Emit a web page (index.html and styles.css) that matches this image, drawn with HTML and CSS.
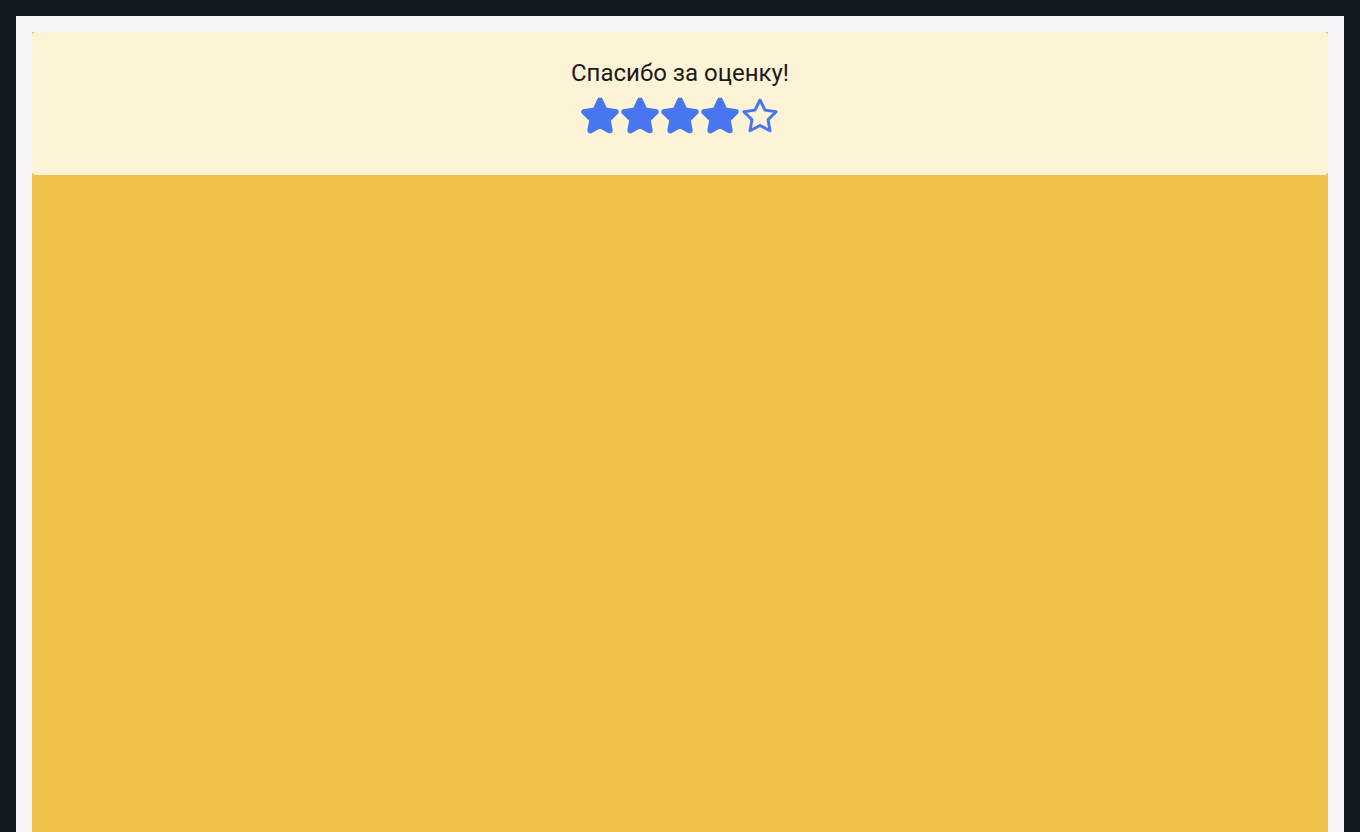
FILE: index.html
```html
<!DOCTYPE html>
<html lang="ru">
<head>
<meta charset="utf-8">
<title>Спасибо за оценку</title>
<link rel="stylesheet" href="styles.css">
</head>
<body>
<div class="frame">
  <div class="stage">
    <div class="card">
      <div class="title">Спасибо за оценку!</div>
      <div class="stars">
        <svg class="star" viewBox="0 0 40 40"><polygon class="fill" points="20,5.5 24.7,15.53 35.69,16.9 27.61,24.47 29.7,35.35 20,30 10.3,35.35 12.39,24.47 4.31,16.9 15.3,15.53"/></svg>
        <svg class="star" viewBox="0 0 40 40"><polygon class="fill" points="20,5.5 24.7,15.53 35.69,16.9 27.61,24.47 29.7,35.35 20,30 10.3,35.35 12.39,24.47 4.31,16.9 15.3,15.53"/></svg>
        <svg class="star" viewBox="0 0 40 40"><polygon class="fill" points="20,5.5 24.7,15.53 35.69,16.9 27.61,24.47 29.7,35.35 20,30 10.3,35.35 12.39,24.47 4.31,16.9 15.3,15.53"/></svg>
        <svg class="star" viewBox="0 0 40 40"><polygon class="fill" points="20,5.5 24.7,15.53 35.69,16.9 27.61,24.47 29.7,35.35 20,30 10.3,35.35 12.39,24.47 4.31,16.9 15.3,15.53"/></svg>
        <svg class="star" viewBox="0 0 40 40"><polygon class="outline" points="20,5 25,15.12 36.17,16.75 28.08,24.63 29.99,35.75 20,30.5 10.01,35.75 11.92,24.63 3.83,16.75 15,15.12"/></svg>
      </div>
    </div>
  </div>
</div>
</body>
</html>
```

FILE: styles.css
```css
html, body {
  margin: 0;
  padding: 0;
  height: 100%;
  background: #131a1f;
  overflow: hidden;
}
body {
  font-family: Roboto, "Noto Sans", sans-serif;
}
.frame {
  margin: 16px 16px 0;
  padding: 16px 16px 0;
  background: #f8f4fa;
  height: calc(100% - 16px);
  box-sizing: border-box;
}
.stage {
  background: #f0c14b;
  height: 100%;
}
.card {
  background: #fdf3d6;
  border-radius: 4px;
  height: 143px;
  box-sizing: border-box;
  padding-top: 27px;
  display: flex;
  flex-direction: column;
  align-items: center;
}
.title {
  font-size: 24px;
  line-height: 28px;
  color: #1e1a17;
}
.stars {
  margin-top: 8px;
  display: flex;
}
.star {
  width: 40px;
  height: 40px;
  display: block;
}
.fill {
  fill: #4876ef;
  stroke: #4876ef;
  stroke-width: 6;
  stroke-linejoin: round;
}
.outline {
  fill: none;
  stroke: #4876ef;
  stroke-width: 3;
  stroke-linejoin: round;
}
```
